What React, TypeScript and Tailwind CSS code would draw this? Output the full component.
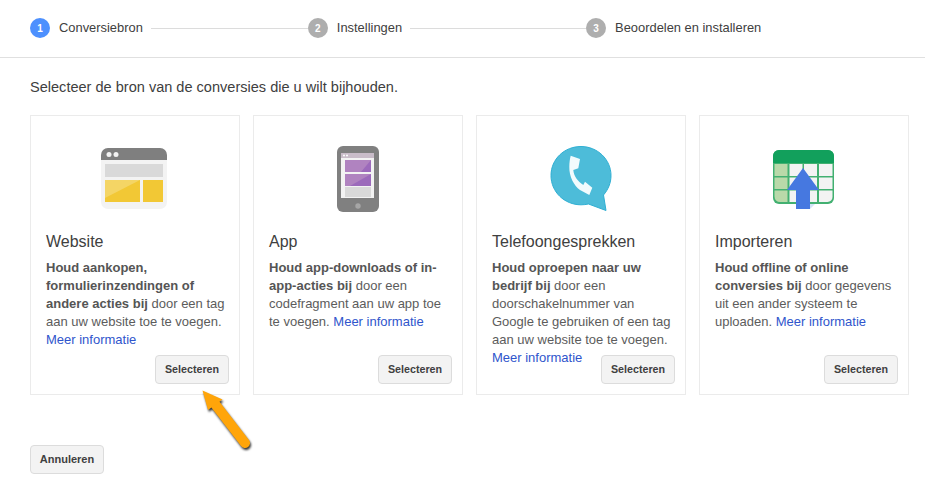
import type { ReactNode } from 'react';

function WebsiteIcon() {
  return (
    <svg className="mr-0.5 mt-0.5" width="66" height="62" viewBox="0 0 66 62">
      <rect width="66" height="61" rx="7" fill="#f3f3f3" />
      <path d="M0 12V7a7 7 0 0 1 7-7h52a7 7 0 0 1 7 7v5z" fill="#7f7f7f" />
      <circle cx="8" cy="6.5" r="2.5" fill="#f3f3f3" />
      <circle cx="15" cy="6.5" r="2.5" fill="#f3f3f3" />
      <rect x="4" y="16" width="58" height="13" fill="#d9d9d9" />
      <rect x="4" y="32" width="35" height="22" fill="#f2c835" />
      <path d="M4 32h35L4 50z" fill="#f4d565" />
      <rect x="42" y="32" width="20" height="22" fill="#f2c835" />
    </svg>
  );
}

function PhoneIcon() {
  return (
    <svg width="42" height="66" viewBox="0 0 42 66">
      <rect width="42" height="66" rx="6" fill="#808080" />
      <rect x="4" y="7" width="33" height="45" fill="#f3f3f3" />
      <rect x="4" y="7" width="33" height="5" fill="#c9bcc9" />
      <circle cx="7" cy="9.5" r="1" fill="#fff" />
      <circle cx="10" cy="9.5" r="1" fill="#fff" />
      <rect x="8" y="14" width="26" height="12" fill="#9c6abb" />
      <path d="M8 14h26l-10 12H8z" fill="#b083c0" />
      <rect x="8" y="28" width="26" height="12" fill="#9c6abb" />
      <path d="M8 28h26L13 40H8z" fill="#b083c0" />
      <rect x="8" y="41" width="26" height="10" fill="#d9d9d9" />
      <circle cx="21" cy="60" r="2.7" fill="#a6a6a6" />
    </svg>
  );
}

function CallIcon() {
  return (
    <svg width="62" height="66" viewBox="0 0 62 66">
      <path d="M31 .5C47.500.5 61 13.500 61 29.500c0 7.500-2.800 14-7.500 19.500l2.500 15.500L38.500 58c-2.300.5-5 .8-7.500.8C14.500 58.800 1 46 1 29.500S14.500.5 31 .5z" fill="#4dbcd9" stroke="#2fafd3" />
      <path d="M20.700 9.700L30 13l-1.700 9.300-5 1.700c.5 6 4.500 11.500 10 15l1.700-3.300 7.300 6-3 7.300-9.300-5C24 40 19 30 19.300 20.700c.1-4 .5-8 1.400-11z" fill="#f2fbfd" />
    </svg>
  );
}

function ImportIcon() {
  return (
    <svg className="mt-1" width="62" height="60" viewBox="0 0 62 60">
      <rect width="61" height="54" rx="6" fill="#42b071" />
      <path d="M0 13V6a6 6 0 0 1 6-6h49a6 6 0 0 1 6 6v7z" fill="#12a05c" />
      <rect x="1.500" y="14" width="13" height="12" fill="#b9d9a9" />
      <rect x="1.500" y="27.500" width="13" height="11.500" fill="#b9d9a9" />
      <path d="M1.500 40.500h13V52H7a5.500 5.500 0 0 1-5.500-5.500z" fill="#b9d9a9" />
      <rect x="16.500" y="14" width="13" height="12" fill="#f3f3f3" />
      <rect x="31" y="14" width="13" height="12" fill="#f3f3f3" />
      <rect x="46" y="14" width="13.500" height="12" fill="#f3f3f3" />
      <rect x="16.500" y="27.500" width="13" height="11.500" fill="#f3f3f3" />
      <rect x="31" y="27.500" width="13" height="11.500" fill="#f3f3f3" />
      <rect x="46" y="27.500" width="13.500" height="11.500" fill="#f3f3f3" />
      <rect x="16.500" y="40.500" width="13" height="11.500" fill="#f3f3f3" />
      <rect x="31" y="40.500" width="13" height="11.500" fill="#f3f3f3" />
      <path d="M46 40.500h13.500V47a5 5 0 0 1-5 5H46z" fill="#f3f3f3" />
      <path d="M37 54h5l-5 5z" fill="#d3e3f8" />
      <path d="M30 18l16 22H37v19H23V40H14z" fill="#4678e0" />
    </svg>
  );
}

function Step({ n, label, active }: { n: number; label: string; active?: boolean }) {
  return (
    <div className="flex items-center">
      <div
        className={`w-5 h-5 rounded-full flex items-center justify-center text-white text-[10px] font-bold ${active ? 'bg-[#4d90fe]' : 'bg-[#aeaeae]'}`}
      >
        {n}
      </div>
      <span className="ml-[9px] text-[12.9px] text-[#404040]">{label}</span>
    </div>
  );
}

function Card({ icon, title, children }: { icon: ReactNode; title: string; children: ReactNode }) {
  return (
    <div className="w-[210px] h-[280px] border border-[#ebebeb] grid grid-cols-1">
      <div className="col-start-1 row-start-1 min-w-0 px-[15px] pt-[30px]">
        <div className="h-[70px] flex justify-center items-start">{icon}</div>
        <h3 className="mt-[16px] text-base leading-5 font-normal text-[#404040]">{title}</h3>
        <p className="mt-[7px] text-[13px] leading-[18px] text-[#5c5c5c] whitespace-nowrap [&_b]:text-[#555]">{children}</p>
      </div>
      <button className="col-start-1 row-start-1 self-end justify-self-end mr-2.5 mb-2.5 w-[74px] h-[29px] text-[10.7px] font-bold text-[#404040] bg-[#f3f3f3] border border-[#dcdcdc] rounded-sm">
        Selecteren
      </button>
    </div>
  );
}

const More = () => <a className="text-[#2f55cc]">Meer informatie</a>;

export default function App() {
  return (
    <div className="relative w-[925px] h-[478px] bg-white overflow-hidden font-['Liberation_Sans',Arial,sans-serif]">
      <div className="h-[58px] border-b border-[#e0e0e0] pl-[30px] pt-[18px] flex items-start">
        <Step n={1} label="Conversiebron" active />
        <div className="w-[157px] h-px bg-[#dcdcdc] ml-2 mt-2.5" />
        <Step n={2} label="Instellingen" />
        <div className="w-[176px] h-px bg-[#dcdcdc] ml-2 mt-2.5" />
        <Step n={3} label="Beoordelen en installeren" />
      </div>

      <div className="pl-[30px]">
        <p className="mt-5 text-[14.55px] leading-[18px] text-[#404040]">Selecteer de bron van de conversies die u wilt bijhouden.</p>
        <div className="mt-[19px] flex gap-[13px]">
          <Card icon={<WebsiteIcon />} title="Website">
            <b>Houd aankopen,<br />formulierinzendingen of<br />andere acties bij</b> door een tag<br />aan uw website toe te voegen.<br /><More />
          </Card>
          <Card icon={<PhoneIcon />} title="App">
            <b>Houd app-downloads of in-<br />app-acties bij</b> door een<br />codefragment aan uw app toe<br />te voegen. <More />
          </Card>
          <Card icon={<CallIcon />} title="Telefoongesprekken">
            <b>Houd oproepen naar uw<br />bedrijf bij</b> door een<br />doorschakelnummer van<br />Google te gebruiken of een tag<br />aan uw website toe te voegen.<br /><More />
          </Card>
          <Card icon={<ImportIcon />} title="Importeren">
            <b>Houd offline of online<br />conversies bij</b> door gegevens<br />uit een ander systeem te<br />uploaden. <More />
          </Card>
        </div>
        <button className="mt-[50px] w-[74px] h-[29px] text-[11px] font-bold text-[#404040] bg-[#f3f3f3] border border-[#dcdcdc] rounded-sm">
          Annuleren
        </button>
      </div>

      {/* annotation arrow on top of the screenshot */}
      <svg className="absolute left-[195px] top-[385px] drop-shadow-[1.5px_2px_1px_rgba(0,0,0,0.8)]" width="65" height="70" viewBox="0 0 65 70">
        <path d="M20 19L50 58" fill="none" stroke="#ffa50a" strokeWidth="10" strokeLinecap="round" />
        <path d="M7.500 5.500l20 9-14.500 10.500z" fill="#ffa50a" />
      </svg>
    </div>
  );
}
